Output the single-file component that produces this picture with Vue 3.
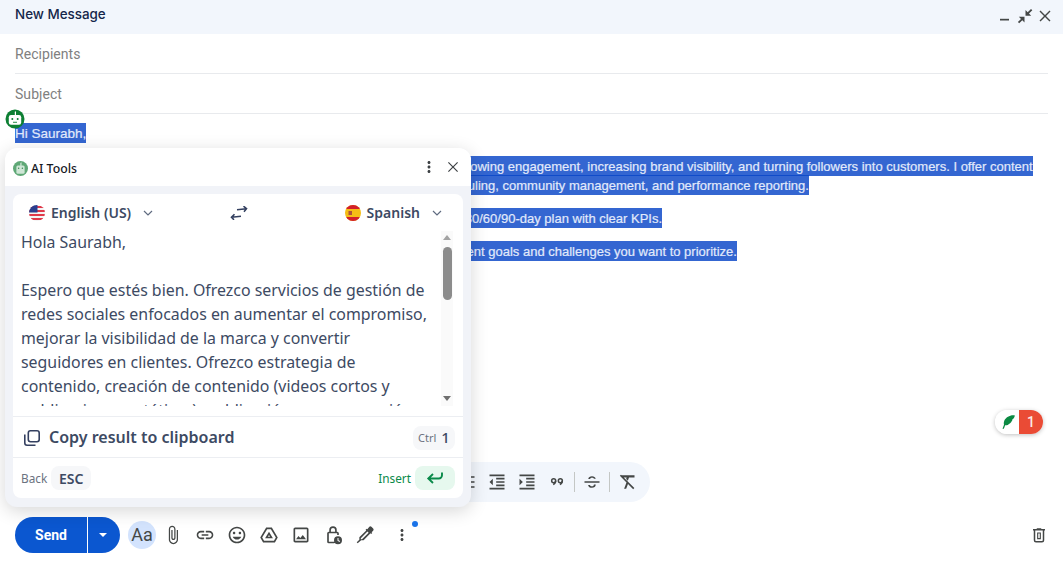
<script setup>
const paragraphs = [
  'Hi Saurabh,',
  "I hope you are well. I provide social media management services focused on growing engagement, increasing brand visibility, and turning followers into customers. I offer content strategy, content creation (short videos and static posts), publishing plus scheduling, community management, and performance reporting.",
  "If you're interested, I can send a sample weekly content calendar along with a 30/60/90-day plan with clear KPIs.",
  'Please let me know the best time this week for a quick call to discuss your current goals and challenges you want to prioritize.',
]

const spanishText = [
  'Hola Saurabh,',
  '',
  'Espero que estés bien. Ofrezco servicios de gestión de redes sociales enfocados en aumentar el compromiso, mejorar la visibilidad de la marca y convertir seguidores en clientes. Ofrezco estrategia de contenido, creación de contenido (videos cortos y publicaciones estáticas), publicación y programación, gestión de la comunidad e informes de rendimiento.',
]

/* format bar icons */
const formatIcons = [
  'M4 10.5a1.5 1.5 0 1 0 0 3 1.5 1.5 0 0 0 0-3zm0-6a1.5 1.5 0 1 0 0 3 1.5 1.5 0 0 0 0-3zm0 12a1.5 1.5 0 1 0 0 3 1.5 1.5 0 0 0 0-3zM7 19h14v-2H7v2zm0-6h14v-2H7v2zm0-8v2h14V5H7z',
  'M11 17h10v-2H11v2zm-8-5l4 4V8l-4 4zm0 9h18v-2H3v2zM3 3v2h18V3H3zm8 6h10V7H11v2zm0 4h10v-2H11v2z',
  'M3 21h18v-2H3v2zM3 8v8l4-4-4-4zm8 9h10v-2H11v2zM3 3v2h18V3H3zm8 6h10V7H11v2zm0 4h10v-2H11v2z',
]

const footerIcons = [
  'M16.5 6v11.5c0 2.21-1.79 4-4 4s-4-1.79-4-4V5c0-1.38 1.12-2.5 2.5-2.5s2.5 1.12 2.5 2.5v10.5c0 .55-.45 1-1 1s-1-.45-1-1V6H10v9.5c0 1.38 1.12 2.5 2.5 2.5s2.5-1.12 2.5-2.5V5c0-2.21-1.79-4-4-4S7 2.79 7 5v12.5c0 3.04 2.46 5.5 5.5 5.5s5.5-2.46 5.5-5.5V6h-1.5z',
  'M3.9 12c0-1.71 1.39-3.1 3.1-3.1h4V7H7c-2.76 0-5 2.24-5 5s2.24 5 5 5h4v-1.9H7c-1.71 0-3.1-1.39-3.1-3.1zM8 13h8v-2H8v2zm9-6h-4v1.9h4c1.71 0 3.1 1.39 3.1 3.1s-1.39 3.1-3.1 3.1h-4V17h4c2.76 0 5-2.24 5-5s-2.24-5-5-5z',
  'M11.99 2C6.47 2 2 6.48 2 12s4.47 10 9.99 10C17.52 22 22 17.52 22 12S17.52 2 11.99 2zM12 20c-4.42 0-8-3.58-8-8s3.58-8 8-8 8 3.58 8 8-3.58 8-8 8zm3.5-9c.83 0 1.5-.67 1.5-1.5S16.33 8 15.5 8 14 8.67 14 9.5s.67 1.5 1.5 1.5zm-7 0c.83 0 1.5-.67 1.5-1.5S9.33 8 8.5 8 7 8.67 7 9.5 7.67 11 8.5 11zm3.5 6.5c2.33 0 4.31-1.46 5.11-3.5H6.89c.8 2.04 2.78 3.5 5.11 3.5z',
  'M8.6 3h6.8L22.5 15l-3.4 6H4.9L1.5 15 8.6 3zm1.15 2L3.8 15l2.25 4h11.9l2.25-4L14.25 5h-4.5zM12 8l4.7 8H7.3L12 8zm0 4l-1.2 2h2.4L12 12z',
  'M19 5v14H5V5h14m0-2H5c-1.1 0-2 .9-2 2v14c0 1.1.9 2 2 2h14c1.1 0 2-.9 2-2V5c0-1.1-.9-2-2-2zm-4.86 8.86l-3 3.87L9 13.14 6 17h12l-3.86-5.14z',
  'M12 1.5A4.5 4.5 0 0 0 7.5 6v2H7a2 2 0 0 0-2 2v10a2 2 0 0 0 2 2h6.5v-2H7V10h10v2h2v-2a2 2 0 0 0-2-2h-.5V6A4.5 4.5 0 0 0 12 1.5zm0 2A2.5 2.5 0 0 1 14.5 6v2h-5V6A2.5 2.5 0 0 1 12 3.5zM18 13.5a4.8 4.8 0 1 0 0 9.6 4.8 4.8 0 0 0 0-9.6zm-.6 2h1.2v2.7l1.9 1.1-.6 1-2.5-1.5v-3.3z',
  'M17.2 2.2a1.8 1.8 0 0 1 2.5 0l2.1 2.1a1.8 1.8 0 0 1 0 2.5l-1.9 1.9.8.8-1.3 1.3-.8-.8-8.3 8.3H7.4L3.2 21.9l-1.1-1.1 3.1-3.1v-2.9l8.3-8.3-.8-.8 1.3-1.3.8.8 2.4-3zM14.9 7.9L7 15.8v1.4h1.4l7.9-7.9-1.4-1.4z',
]

const moreVert = 'M12 8c1.1 0 2-.9 2-2s-.9-2-2-2-2 .9-2 2 .9 2 2 2zm0 2c-1.1 0-2 .9-2 2s.9 2 2 2 2-.9 2-2-.9-2-2-2zm0 6c-1.1 0-2 .9-2 2s.9 2 2 2 2-.9 2-2-.9-2-2-2z'
</script>

<template>
  <div class="compose">
    <header class="title-bar">
      <span class="title">New Message</span>
      <div class="window-btns">
        <svg width="20" height="20" viewBox="0 0 20 20"><path d="M5 12.8h9v1.7H5z" fill="#444746" /></svg>
        <svg width="20" height="20" viewBox="0 0 20 20"><path d="M16 3l1.3 1.3-3.3 3.3 2.2 2.2h-5.7V4.1l2.2 2.2L16 3zM9.5 10.7v5.7l-2.2-2.2-3.1 3.1L2.9 16l3.1-3.1-2.2-2.2h5.7z" fill="#444746" /></svg>
        <svg width="20" height="20" viewBox="0 0 20 20"><path d="M5.5 4.5L10 9l4.5-4.5 1 1L11 10l4.5 4.5-1 1L10 11l-4.5 4.5-1-1L9 10 4.5 5.5z" fill="#444746" /></svg>
      </div>
    </header>

    <div class="field">Recipients</div>
    <div class="field">Subject</div>

    <div class="body">
      <p v-for="(text, i) in paragraphs" :key="i"><span class="selected">{{ text }}</span></p>

      <div class="format-bar">
        <div class="format-icons">
          <svg v-for="(d, i) in formatIcons" :key="i" width="20" height="20" viewBox="0 0 24 24"><path :d="d" fill="#444746" /></svg>
          <svg width="20" height="20" viewBox="0 0 24 24"><g fill="none" stroke="#444746" stroke-width="1.8"><circle cx="8" cy="10.5" r="2.4" /><path d="M10.4 10.5c0 2.5-.9 3.8-3 4.5" /><circle cx="16" cy="10.5" r="2.4" /><path d="M18.4 10.5c0 2.5-.9 3.8-3 4.5" /></g></svg>
        </div>
        <span class="format-sep"></span>
        <svg width="20" height="20" viewBox="0 0 24 24"><path d="M3 11h18v2H3zM7.5 8.5C7.8 6 9.6 5 12 5s4 1 4.5 3h-2.2c-.3-.8-1.1-1.2-2.3-1.2s-2 .5-2.3 1.7H7.5zM16.5 15c0 2.5-2 4-4.5 4s-4.3-1.2-4.7-3.5h2.2c.3 1 1.2 1.7 2.5 1.7 1.4 0 2.3-.8 2.3-2.2h2.2z" fill="#444746" /></svg>
        <span class="format-sep"></span>
        <svg width="20" height="20" viewBox="0 0 24 24"><path d="M5 4h16v2.5h-6.6L13 10.4l-2.1-2.1.7-1.8H7.5L5 4zM3.4 4.6 4.8 3.2l16 16-1.4 1.4-6.2-6.2L11 20H8.5l2.9-7.4-8-8z" fill="#444746" /></svg>
      </div>

      <svg class="robot-badge" width="20" height="20" viewBox="0 0 20 20">
        <circle cx="10" cy="10" r="9.5" fill="#0d7f33" />
        <rect x="3.8" y="6" width="12.4" height="9.8" rx="2.2" fill="#fff" />
        <path d="M9.8 2.8l1.2-.6v4.3H9.8z" fill="#fff" />
        <circle cx="7.3" cy="10" r="1" fill="#0d7f33" />
        <circle cx="12.7" cy="10" r="1" fill="#0d7f33" />
        <rect x="8" y="12.8" width="4" height=".9" fill="#0d7f33" />
      </svg>

      <div class="grammar-badge">
        <span class="leaf">
          <svg width="16" height="16" viewBox="0 0 14 14"><path d="M2.2 13C2.7 11.5 3 10.4 3.5 9.3 2.8 6.5 4.5 2.8 9 1.5c1.5-.4 3-.4 4-.2-.3 2-1.5 3-2.3 3.5.3.5 0 1-.5 1.5C9.5 7.5 9 8 8.5 8.3 7 9.8 5.5 10 4.5 9.8L3.4 13z" fill="#0b8a43" /></svg>
        </span>
        <span class="count">1</span>
      </div>

      <!-- AI tools popup, lies over the message -->
      <section class="ai-panel">
        <div class="ai-head">
          <svg width="15" height="15" viewBox="0 0 20 20">
            <circle cx="10" cy="10" r="10" fill="#5fa876" />
            <rect x="4.5" y="6" width="11" height="11" rx="2" fill="#cfe6d6" />
            <path d="M10 2.5l1.2-.8v4.5H10z" fill="#fff" />
            <circle cx="7.5" cy="9.5" r="1" fill="#3d8a56" />
            <circle cx="12.5" cy="9.5" r="1" fill="#3d8a56" />
          </svg>
          <span class="ai-title">AI Tools</span>
          <svg class="ai-more" width="18" height="18" viewBox="0 0 24 24"><path :d="moreVert" fill="#3c4043" /></svg>
          <svg class="ai-close" width="18" height="18" viewBox="0 0 18 18"><path d="M4 4.8l.8-.8L9 8.2 13.2 4l.8.8L9.8 9l4.2 4.2-.8.8L9 9.8 4.8 14l-.8-.8L8.2 9z" fill="#3c4043" /></svg>
        </div>

        <div class="ai-card">
          <div class="lang-row">
            <div class="lang">
              <svg width="16" height="16" viewBox="0 0 16 16">
                <defs><clipPath id="us"><circle cx="8" cy="8" r="8" /></clipPath></defs>
                <g clip-path="url(#us)">
                  <rect width="16" height="16" fill="#f4f4f4" />
                  <path d="M0 1h16v2H0zM0 5h16v2H0zM0 9h16v2H0zM0 13h16v2H0z" fill="#e0394a" />
                  <rect width="8.5" height="7.5" fill="#2b3f8f" />
                </g>
              </svg>
              <span>English (US)</span>
              <svg class="chev" width="10" height="6" viewBox="0 0 10 6"><path d="M1 1l4 4 4-4" fill="none" stroke="#5f6b80" stroke-width="1.2" /></svg>
            </div>
            <svg class="swap" width="18" height="14" viewBox="0 0 18 14"><path d="M7 3.7l9.5-1M13.5 .2l3 2.5-2.5 3M11 10.3l-9.5 1M4.5 8.3l-3 3 2.5 2.5" fill="none" stroke="#344060" stroke-width="1.6" /></svg>
            <div class="lang">
              <svg width="16" height="16" viewBox="0 0 16 16">
                <defs><clipPath id="es"><circle cx="8" cy="8" r="8" /></clipPath></defs>
                <g clip-path="url(#es)">
                  <rect width="16" height="16" fill="#f5bd15" />
                  <path d="M0 0h16v4H0zM0 12h16v4H0z" fill="#d21f2b" />
                  <rect x="3.5" y="6" width="3.5" height="4" fill="#b0503a" />
                </g>
              </svg>
              <span>Spanish</span>
              <svg class="chev" width="10" height="6" viewBox="0 0 10 6"><path d="M1 1l4 4 4-4" fill="none" stroke="#5f6b80" stroke-width="1.2" /></svg>
            </div>
          </div>

          <div class="result">
            <div class="result-text">
              <template v-for="(line, i) in spanishText" :key="i">
                <p v-if="line">{{ line }}</p>
                <p v-else>&nbsp;</p>
              </template>
            </div>
            <div class="scrollbar">
              <span class="arrow up"></span>
              <span class="thumb"></span>
              <span class="arrow down"></span>
            </div>
          </div>

          <div class="copy-row">
            <svg width="18" height="18" viewBox="0 0 18 18"><rect x="5.3" y="1.8" width="10.9" height="10.9" rx="2.2" fill="none" stroke="#344060" stroke-width="1.6" /><path d="M1.8 5.5V14a2.2 2.2 0 0 0 2.2 2.2h8.5" fill="none" stroke="#344060" stroke-width="1.6" /></svg>
            <span class="copy-text">Copy result to clipboard</span>
            <span class="key ctrl"><small>Ctrl</small> 1</span>
          </div>

          <div class="action-row">
            <span class="back">Back</span>
            <span class="key esc">ESC</span>
            <span class="insert">Insert</span>
            <span class="key enter">
              <svg width="18" height="14" viewBox="0 0 18 14"><path d="M16 1.5v2.8a3.2 3.2 0 0 1-3.2 3.2H2.5M7 3L2.3 7.5 7 12" fill="none" stroke="#0a8a4a" stroke-width="1.9" /></svg>
            </span>
          </div>
        </div>
      </section>
    </div>

    <footer class="actions">
      <div class="send">
        <span class="send-label">Send</span>
        <span class="send-menu"><i></i></span>
      </div>
      <span class="aa">Aa</span>
      <div class="tool-icons">
        <svg v-for="(d, i) in footerIcons" :key="i" width="20" height="20" viewBox="0 0 24 24"><path :d="d" fill="#444746" /></svg>
      </div>
      <div class="more">
        <svg width="18" height="18" viewBox="0 0 24 24"><path :d="moreVert" fill="#444746" /></svg>
        <span class="dot"></span>
      </div>
      <svg class="trash" width="18" height="18" viewBox="0 0 24 24"><path d="M15 3v1h5v2h-1v13a3 3 0 0 1-3 3H8a3 3 0 0 1-3-3V6H4V4h5V3h6zM7 6v13c0 .6.4 1 1 1h8c.6 0 1-.4 1-1V6H7zm2.5 2.5h5v9h-5v-9zm1.5 1.5v6h2v-6h-2z" fill="#444746" /></svg>
    </footer>
  </div>
</template>

<style scoped>
.compose {
  width: 1063px;
  height: 565px;
  display: flex;
  flex-direction: column;
  overflow: hidden;
  background: #fff;
  font-family: Roboto, "Liberation Sans", sans-serif;
}

.title-bar {
  height: 34px;
  flex: none;
  display: flex;
  align-items: center;
  justify-content: space-between;
  padding: 0 8px 6px 15px;
  box-sizing: border-box;
  background: #f2f6fc;
}
.title {
  font-family: Inter, Roboto, sans-serif;
  font-size: 13.4px;
  font-weight: 500;
  color: #14264a;
  line-height: 28px;
}
.window-btns {
  display: flex;
  margin-top: 3px;
}

.field {
  height: 40px;
  flex: none;
  box-sizing: border-box;
  margin: 0 15px;
  border-bottom: 1px solid #e8eaed;
  display: flex;
  align-items: center;
  padding-top: 1px;
  font-size: 14px;
  letter-spacing: 0.05px;
  color: #808080;
}

.body {
  flex: 1;
  position: relative;
  display: flex;
  flex-direction: column;
  padding: 9.5px 15px 0;
  font-family: "Liberation Sans", Arial, sans-serif;
  font-size: 13px;
  line-height: 19px;
}
.body > p {
  margin: 0 0 14px;
}
.body > p:first-child {
  font-size: 13.5px;
}
.selected {
  padding: 2.5px 0;
  background: rgba(11, 71, 200, 0.83);
  color: #e2eafb;
  -webkit-text-stroke: 0.2px #e2eafb;
}

.format-bar {
  margin-top: auto;
  margin-bottom: 15px;
  width: 635px;
  height: 40px;
  flex: none;
  box-sizing: border-box;
  padding-right: 13px;
  border-radius: 20px;
  background: #f2f6fc;
  display: flex;
  align-items: center;
  justify-content: flex-end;
  gap: 7px;
}
.format-icons {
  display: flex;
  gap: 10px;
}
.format-sep {
  width: 1px;
  height: 20px;
  background: #c4c7c5;
}

.robot-badge {
  position: absolute;
  left: 5px;
  top: -5px;
}

.grammar-badge {
  position: absolute;
  left: 995px;
  top: 296px;
  width: 48px;
  height: 24px;
  display: flex;
  border-radius: 12px;
  overflow: hidden;
  box-shadow: 0 1px 4px rgba(0, 0, 0, 0.25);
  font-family: Roboto, sans-serif;
}
.leaf {
  width: 24px;
  background: #fff;
  display: flex;
  align-items: center;
  justify-content: center;
  padding-left: 2px;
  box-sizing: border-box;
}
.count {
  width: 24px;
  background: #ea4b35;
  color: #fbe9e6;
  font-size: 14px;
  font-weight: 500;
  line-height: 24px;
  text-align: center;
}

.ai-panel {
  position: absolute;
  left: 5px;
  top: 34px;
  width: 466px;
  height: 359px;
  display: flex;
  flex-direction: column;
  border-radius: 12px;
  overflow: hidden;
  background: #f1f3f8;
  box-shadow: 0 4px 18px rgba(0, 0, 0, 0.16);
  font-family: "Noto Sans", "Open Sans", sans-serif;
  color: #3d4a63;
}
.ai-head {
  height: 38px;
  flex: none;
  background: #fff;
  display: flex;
  align-items: center;
  padding: 2px 9px 0 8px;
  box-sizing: border-box;
}
.ai-title {
  margin-left: 3px;
  flex: 1;
  font-size: 12.3px;
  font-weight: 500;
  color: #16191f;
}
.ai-more,
.ai-close {
  margin-top: -2px;
}
.ai-more {
  margin-right: 6px;
}
.ai-card {
  margin: 8px 8px 9px;
  flex: 1;
  min-height: 0;
  display: flex;
  flex-direction: column;
  border-radius: 8px;
  background: #fff;
}

.lang-row {
  height: 37px;
  flex: none;
  display: flex;
  align-items: center;
  justify-content: space-between;
  padding: 0 21px 0 16px;
}
.lang {
  display: flex;
  align-items: center;
  gap: 6px;
  font-size: 14px;
  font-weight: 600;
  color: #3d4a63;
}
.chev {
  margin-left: 6px;
}
.swap {
  margin-right: 20px;
}

.result {
  height: 175px;
  flex: none;
  display: flex;
  padding: 0 10px 0 8px;
  overflow: hidden;
}
.result-text {
  flex: 1;
  min-width: 0;
  margin-top: -1px;
  font-size: 15.9px;
  line-height: 24px;
  color: #3d4a63;
}
.result-text p {
  margin: 0;
}
.scrollbar {
  width: 12px;
  flex: none;
  margin-left: 10px;
  display: flex;
  flex-direction: column;
  align-items: center;
  background: #fafafa;
}
.thumb {
  width: 9px;
  height: 53px;
  margin-top: 7px;
  border-radius: 5px;
  background: #8c8c8c;
}
.arrow {
  width: 0;
  height: 0;
  border-left: 4px solid transparent;
  border-right: 4px solid transparent;
}
.arrow.up {
  margin-top: 4px;
  border-bottom: 5px solid #a3a3a3;
}
.arrow.down {
  margin-top: auto;
  margin-bottom: 5px;
  border-top: 5px solid #6f6f6f;
}

.copy-row {
  margin-top: 10px;
  height: 42px;
  flex: none;
  box-sizing: border-box;
  border-top: 1px solid #eceef2;
  border-bottom: 1px solid #eceef2;
  display: flex;
  align-items: center;
  padding: 1px 8px 0 10px;
}
.copy-text {
  margin-left: 8px;
  flex: 1;
  font-size: 16px;
  font-weight: 600;
  color: #3d4a63;
}
.key {
  display: inline-flex;
  align-items: center;
  justify-content: center;
  height: 24px;
  box-sizing: border-box;
  border-radius: 8px;
  background: #f6f7f9;
}
.ctrl {
  width: 42px;
  gap: 5px;
  font-size: 15px;
  font-weight: 500;
}
.ctrl small {
  font-size: 11px;
  font-weight: 400;
  color: #6b7280;
}

.action-row {
  flex: 1;
  display: flex;
  align-items: center;
  padding: 0 8px;
}
.back {
  font-size: 11.8px;
  color: #6b7280;
  margin-right: 4px;
}
.esc {
  width: 40px;
  font-size: 14px;
  font-weight: 600;
}
.insert {
  margin-left: auto;
  margin-right: 4px;
  font-size: 11.8px;
  color: #0a8a4a;
}
.enter {
  width: 40px;
  background: #e6f8ee;
}

.actions {
  height: 36px;
  flex: none;
  margin-bottom: 12px;
  padding: 0 15px;
  display: flex;
  align-items: center;
}
.send {
  width: 105px;
  height: 36px;
  display: flex;
  border-radius: 18px;
  overflow: hidden;
  background: #0b57d0;
  color: #fff;
}
.send-label {
  width: 72px;
  line-height: 36px;
  text-align: center;
  font-size: 14px;
  font-weight: 700;
  border-right: 1px solid #fff;
}
.send-menu {
  flex: 1;
  display: flex;
  align-items: center;
  justify-content: center;
  padding-right: 3px;
}
.send-menu i {
  border-left: 4px solid transparent;
  border-right: 4px solid transparent;
  border-top: 4px solid #fff;
}
.aa {
  margin-left: 8px;
  width: 28px;
  height: 28px;
  flex: none;
  border-radius: 50%;
  background: #d3e3fd;
  color: #444746;
  font-size: 18px;
  line-height: 28px;
  text-align: center;
}
.tool-icons {
  margin-left: 7px;
  display: flex;
  gap: 12px;
}
.more {
  position: relative;
  margin-left: 18px;
  height: 18px;
}
.dot {
  position: absolute;
  left: 19px;
  top: -5px;
  width: 6px;
  height: 6px;
  border-radius: 50%;
  background: #1a73e8;
}
.trash {
  margin-left: auto;
}
</style>

<style>
html, body {
  margin: 0;
  background: #fff;
}
</style>
